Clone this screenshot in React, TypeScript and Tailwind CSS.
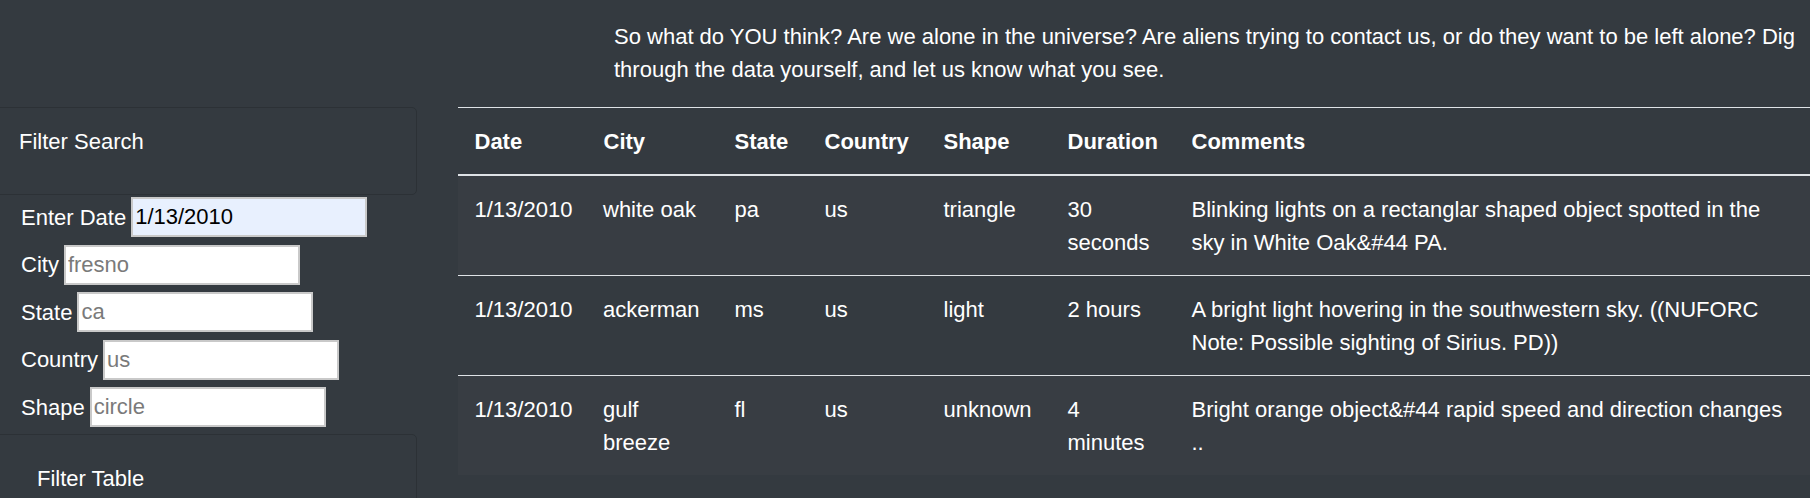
import React from "react";

const rows = [
  {
    date: "1/13/2010",
    city: "white oak",
    state: "pa",
    country: "us",
    shape: "triangle",
    duration: "30 seconds",
    comments: ["Blinking lights on a rectanglar shaped object spotted in the", "sky in White Oak&#44 PA."],
  },
  {
    date: "1/13/2010",
    city: "ackerman",
    state: "ms",
    country: "us",
    shape: "light",
    duration: "2 hours",
    comments: ["A bright light hovering in the southwestern sky. ((NUFORC", "Note: Possible sighting of Sirius. PD))"],
  },
  {
    date: "1/13/2010",
    city: "gulf breeze",
    state: "fl",
    country: "us",
    shape: "unknown",
    duration: "4 minutes",
    comments: ["Bright orange object&#44 rapid speed and direction changes", ".."],
  },
];

const fields = [
  { label: "Enter Date", value: "1/13/2010", placeholder: "" },
  { label: "City", value: "", placeholder: "fresno" },
  { label: "State", value: "", placeholder: "ca" },
  { label: "Country", value: "", placeholder: "us" },
  { label: "Shape", value: "", placeholder: "circle" },
];

export default function App() {
  return (
    <div className="w-[1810px] h-[498px] overflow-hidden bg-[#343a40] text-white font-['Liberation_Sans',Arial,sans-serif] text-[22px] leading-[33px]">
      <div className="flex h-[107px] pt-[20px]">
        <div className="w-[614px] shrink-0" />
        <p className="whitespace-nowrap">
          So what do YOU think? Are we alone in the universe? Are aliens trying to contact us, or do they want to be left alone? Dig
          <br />
          through the data yourself, and let us know what you see.
        </p>
      </div>
      <div className="flex items-start">
        <aside className="w-[426px] shrink-0 -ml-[9px] flex flex-col">
          <div className="h-[88px] border border-[#2c3136] rounded-[5px] pl-[27px] pt-[16.5px]">Filter Search</div>
          <div className="flex flex-col gap-[7.5px] pt-[2px] pl-[30px]">
            {fields.map((f) => (
              <div key={f.label} className="flex items-center gap-[5px]">
                <label>{f.label}</label>
                <input
                  defaultValue={f.value}
                  placeholder={f.placeholder}
                  className={
                    "w-[236px] h-[40px] border-2 border-[#c9c9c9] px-[2px] text-[22px] leading-[33px] placeholder:text-[#7a7a7a] outline-none " +
                    (f.value ? "bg-[#e8f0fe] text-black" : "bg-white text-black")
                  }
                />
              </div>
            ))}
          </div>
          <div className="mt-[7px] h-[100px] border border-[#2c3136] rounded-[5px] pl-[45px] pt-[27px]">Filter Table</div>
        </aside>
        <table className="ml-[41px] shrink-0 table-fixed border-collapse w-[1377px] border-t border-[#dee2e6]">
          <colgroup>
            <col className="w-[129px]" />
            <col className="w-[131px]" />
            <col className="w-[90px]" />
            <col className="w-[119px]" />
            <col className="w-[124px]" />
            <col className="w-[124px]" />
            <col className="w-[660px]" />
          </colgroup>
          <thead>
            <tr className="border-b-2 border-[#dee2e6]">
              {["Date", "City", "State", "Country", "Shape", "Duration", "Comments"].map((h) => (
                <th key={h} className="text-left font-bold whitespace-nowrap px-[16.5px] py-[16.5px] align-top">
                  {h}
                </th>
              ))}
            </tr>
          </thead>
          <tbody>
            {rows.map((r, i) => (
              <tr key={i} className={"border-t border-[#dee2e6] " + (i % 2 === 0 ? "bg-[#383d43]" : "")}>
                <td className="px-[16.5px] py-[16.5px] align-top whitespace-nowrap">{r.date}</td>
                <td className="px-[16px] py-[16.5px] align-top">{r.city}</td>
                <td className="px-[16.5px] py-[16.5px] align-top">{r.state}</td>
                <td className="px-[16.5px] py-[16.5px] align-top">{r.country}</td>
                <td className="px-[16.5px] py-[16.5px] align-top">{r.shape}</td>
                <td className="px-[16.5px] py-[16.5px] align-top">{r.duration}</td>
                <td className="px-[16.5px] py-[16.5px] align-top whitespace-nowrap">
                  {r.comments[0]}
                  <br />
                  {r.comments[1]}
                </td>
              </tr>
            ))}
          </tbody>
        </table>
      </div>
    </div>
  );
}
